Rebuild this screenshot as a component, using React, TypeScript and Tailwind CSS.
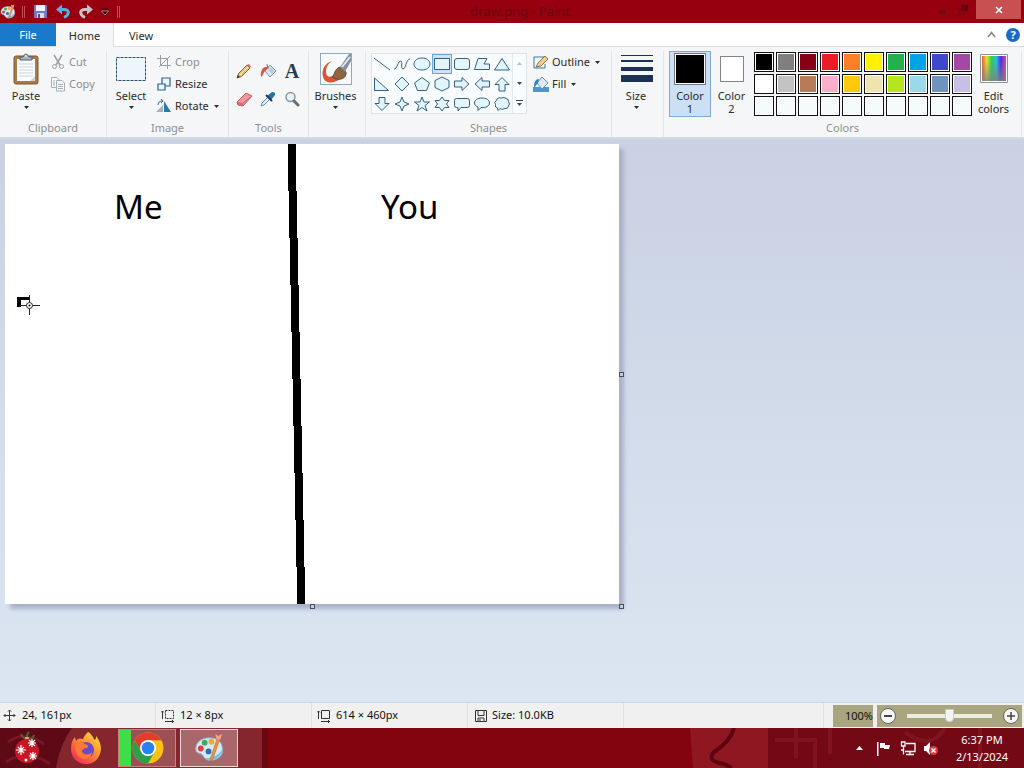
import React from 'react';

const INK = '#1f4e79';

const TOP_COLORS = ['#000000', '#7f7f7f', '#880015', '#ed1c24', '#ff7f27', '#fff200', '#22b14c', '#00a2e8', '#3f48cc', '#a349a4'];
const MID_COLORS = ['#ffffff', '#c3c3c3', '#b97a57', '#ffaec9', '#ffc90e', '#efe4b0', '#b5e61d', '#99d9ea', '#7092be', '#c8bfe7'];
const EMPTY_COLORS = Array.from({ length: 10 }, () => '#f5fafb');
const PALETTE = [...TOP_COLORS, ...MID_COLORS, ...EMPTY_COLORS];

const SHAPES: { name: string; d: string }[] = [
  { name: 'Line', d: 'M2 4 L18 16' },
  { name: 'Curve', d: 'M2 15 C5 16 6 6 9 7 C11 8 8 14 11 15 C14 15 14 5 18 5' },
  { name: 'Oval', d: 'M10 4 C14.500 4 18 6.500 18 10 C18 13.500 14.500 16 10 16 C5.500 16 2 13.500 2 10 C2 6.500 5.500 4 10 4 Z' },
  { name: 'Rectangle', d: 'M2.500 4.500 H17.500 V15.500 H2.500 Z' },
  { name: 'Rounded rectangle', d: 'M5 4.500 H15 Q17.500 4.500 17.500 7 V13 Q17.500 15.500 15 15.500 H5 Q2.500 15.500 2.500 13 V7 Q2.500 4.500 5 4.500 Z' },
  { name: 'Polygon', d: 'M6 4.500 H15 L12 10 H17.500 V15.500 H2.500 Z' },
  { name: 'Triangle', d: 'M10 4.500 L17.500 16 H2.500 Z' },
  { name: 'Right triangle', d: 'M2.500 4 V16.500 H16.500 Z' },
  { name: 'Diamond', d: 'M10 3 L17 10 L10 17 L3 10 Z' },
  { name: 'Pentagon', d: 'M10 3.500 L17.500 9 L14.500 16.500 H5.500 L2.500 9 Z' },
  { name: 'Hexagon', d: 'M10 3 L17 6.500 V13.500 L10 17 L3 13.500 V6.500 Z' },
  { name: 'Right arrow', d: 'M2.500 7 H10 V3.500 L17 10 L10 16.500 V13 H2.500 Z' },
  { name: 'Left arrow', d: 'M17.500 7 H10 V3.500 L3 10 L10 16.500 V13 H17.500 Z' },
  { name: 'Up arrow', d: 'M7 17 V10.500 H3 L10 3.500 L17 10.500 H13 V17 Z' },
  { name: 'Down arrow', d: 'M7 3.500 V9.500 H3 L10 16.500 L17 9.500 H13 V3.500 Z' },
  { name: 'Four-point star', d: 'M10 3 L12 8 L17 10 L12 12 L10 17 L8 12 L3 10 L8 8 Z' },
  { name: 'Five-point star', d: 'M10 3 L12 8 H17.500 L13 11.500 L15 17 L10 13.500 L5 17 L7 11.500 L2.500 8 H8 Z' },
  { name: 'Six-point star', d: 'M10 3 L12.500 6.500 H17 L14.500 10 L17 13.500 H12.500 L10 17 L7.500 13.500 H3 L5.500 10 L3 6.500 H7.500 Z' },
  { name: 'Rounded callout', d: 'M4.500 4.500 H15.500 Q17.500 4.500 17.500 6.500 V11.500 Q17.500 13.500 15.500 13.500 H9 L6 17 V13.500 H4.500 Q2.500 13.500 2.500 11.500 V6.500 Q2.500 4.500 4.500 4.500 Z' },
  { name: 'Oval callout', d: 'M10 4 C14.500 4 17.500 6 17.500 9 C17.500 12 14 14 9 13.500 L6 16.500 V13 C3.500 12 2.500 10.500 2.500 9 C2.500 6 5.500 4 10 4 Z' },
  { name: 'Cloud callout', d: 'M5 5 Q7 3 9.500 4 Q12 2.500 14 4.500 Q17 5 16.500 7.500 Q18.500 10 16.500 12 Q16 15 13 14.500 Q10 16.500 8 14.500 L6 16.500 L5.500 14 Q2.500 13.500 3.500 10.500 Q1.500 8 4 7 Z' },
];

function Caret({ className = '' }: { className?: string }) {
  return (
    <svg className={className} width="5" height="3" viewBox="0 0 5 3" aria-hidden="true">
      <path d="M0 0 H5 L2.500 3 Z" fill="currentColor" />
    </svg>
  );
}

function PaletteIcon({ size }: { size: number }) {
  return (
    <svg width={size} height={size} viewBox="0 0 32 32" aria-hidden="true">
      <path d="M16 5 C6 5 1 11 2 18 C3 22 7 20 9 23 C11 27 14 29 19 28 C27 27 31 21 29 14 C28 8 23 5 16 5 Z" fill="#d5e8f3" stroke="#7fb4d4" />
      <path d="M11 26 C17 30 28 27 29 17 C26 23 19 26 11 26 Z" fill="#72bfe3" />
      <circle cx="7" cy="16" r="3" fill="#d9453c" />
      <circle cx="11" cy="10" r="3" fill="#44a661" />
      <circle cx="18" cy="9" r="3" fill="#f0a83a" />
      <circle cx="15" cy="19" r="3" fill="#2c6fa8" />
      <path d="M27 6 L19 28 L17 29 L17 26 L24 5 Z" fill="#e89246" stroke="#b5672c" strokeWidth="0.500" />
      <path d="M23 6 L22 1 L25 3 L29 1 L27 7 Z" fill="#f2a488" />
    </svg>
  );
}

function TitleBar() {
  return (
    <header className="relative flex h-[23px] items-center bg-[#96000f] text-[#5f0008]">
      <div className="flex items-center">
        <PaletteIcon size={16} />
        <span className="ml-1.5 h-3 w-[3px] border-x border-[#b9525b]" />
        <button aria-label="Save" className="ml-2">
          <svg width="15" height="15" viewBox="0 0 15 15">
            <path d="M1 1 H14 V14 H1 Z" fill="#7478c4" />
            <path d="M3 1 H12 V7 H3 Z" fill="#f0f2fb" />
            <path d="M4 9 H11 V14 H4 Z" fill="#d8daf0" />
            <path d="M5 10 H7 V14 H5 Z" fill="#4a4f91" />
          </svg>
        </button>
        <button aria-label="Undo" className="ml-2">
          <svg width="15" height="15" viewBox="0 0 15 15">
            <path d="M3 5.500 H8 C14 5.500 13.500 11 8 13.500" fill="none" stroke="#5aaee0" strokeWidth="3" />
            <path d="M0 5.500 L6 0.500 V10.500 Z" fill="#5aaee0" />
          </svg>
        </button>
        <button aria-label="Redo" className="ml-[7px]">
          <svg width="15" height="15" viewBox="0 0 15 15">
            <path d="M12 5.500 H7 C1 5.500 1.500 11 7 13.500" fill="none" stroke="#c9c3cb" strokeWidth="3" />
            <path d="M15 5.500 L9 0.500 V10.500 Z" fill="#c9c3cb" />
          </svg>
        </button>
        <button aria-label="Customize quick access toolbar" className="ml-2">
          <svg width="8" height="8" viewBox="0 0 8 8">
            <path d="M0 1 H8" stroke="#2b0508" />
            <path d="M0.500 3 H7.500 L4 7 Z" fill="#1a0204" stroke="#e0a9ad" strokeWidth="0.700" />
          </svg>
        </button>
        <span className="ml-2 h-3 w-[3px] border-x border-[#b9525b]" />
      </div>
      <h1 className="absolute inset-x-0 pr-0 text-center text-[13px] leading-[23px] text-[#6b0a10] pointer-events-none">
        <span className="pl-4">draw.png - Paint</span>
      </h1>
      <div className="ml-auto flex h-full items-start pr-[3px]">
        <button aria-label="Minimize" className="flex h-[19px] w-6 items-center justify-center pt-1">
          <span className="h-1 w-1.5 bg-[#6a0d14]" />
        </button>
        <button aria-label="Restore" className="flex h-[19px] w-[18px] items-center justify-center">
          <svg width="10" height="10" viewBox="0 0 10 10">
            <path d="M3 0 H10 V6 H3 Z" fill="#62060e" />
            <path d="M0.500 4.500 H6.500 V9.500 H0.500 Z" fill="none" stroke="#730a12" />
          </svg>
        </button>
        <button aria-label="Close" className="ml-1 flex h-[19px] w-[45px] items-center justify-center bg-[#c75050]">
          <svg width="8" height="8" viewBox="0 0 8 8">
            <path d="M1 1 L7 7 M7 1 L1 7" stroke="#fff" strokeWidth="1.600" />
          </svg>
        </button>
      </div>
    </header>
  );
}

function Tabs() {
  return (
    <nav className="flex h-[23px] bg-white text-[11px] leading-[23px]">
      <button className="w-14 bg-[#1979ca] text-white">File</button>
      <button className="z-10 -mb-px h-6 w-[58px] border-r border-[#dadbdc] bg-[#f5f6f7] pt-px text-[#2b2b2b]">Home</button>
      <button className="w-[54px] pt-px text-[#2b2b2b]">View</button>
      <div className="ml-auto flex items-center gap-2.5 pr-1">
        <button aria-label="Minimize the ribbon">
          <svg width="9" height="7" viewBox="0 0 9 7">
            <path d="M1 6 L4.500 1.500 L8 6" fill="none" stroke="#858585" strokeWidth="1.500" />
          </svg>
        </button>
        <button aria-label="Help" className="flex h-[14px] w-[14px] items-center justify-center rounded-full bg-[#1b6cc0] text-[11px] leading-[14px] font-bold text-white">
          ?
        </button>
      </div>
    </nav>
  );
}

function Group({ label, className, children }: { label?: string; className: string; children: React.ReactNode }) {
  return (
    <section className={`flex flex-col border-r border-[#e2e6ea] ${className}`} aria-label={label}>
      <div className="flex h-[70px] items-start">{children}</div>
      {label && <div className="text-center text-[11px] leading-[14px] text-[#8b8f93]">{label}</div>}
    </section>
  );
}

function BigButton({ label, className, caret = true, children }: { label: string; className: string; caret?: boolean; children: React.ReactNode }) {
  return (
    <button className={`flex h-[66px] flex-col items-center pt-0.5 ${className}`}>
      <span className="flex h-8 items-center justify-center">{children}</span>
      <span className="mt-1 text-[11px] leading-[13px]">{label}</span>
      {caret && <Caret className="mt-1" />}
    </button>
  );
}

function RowButton({ label, muted, caret, children }: { label: string; muted?: boolean; caret?: boolean; children: React.ReactNode }) {
  return (
    <button className={`flex h-[22px] items-center gap-[3px] text-[11px] ${muted ? 'text-[#8d8d8d]' : 'text-[#2b2b2b]'}`}>
      <span className="flex w-4 justify-center">{children}</span>
      {label}
      {caret && <Caret className="ml-0.5" />}
    </button>
  );
}

function PencilIcon() {
  return (
    <svg width="16" height="16" viewBox="0 0 16 16">
      <path d="M1 15 L2.500 10.500 L11 2 L14 5 L5.500 13.500 Z" fill="#f2c36b" stroke="#5c4a32" strokeWidth="0.800" />
      <path d="M11 2 L12.500 0.800 L15.200 3.500 L14 5 Z" fill="#d87467" />
      <path d="M1 15 L2 12 L4 14 Z" fill="#333" />
      <path d="M4 12 L12 4" stroke="#fff0c5" />
    </svg>
  );
}

function BucketIcon() {
  return (
    <svg width="17" height="17" viewBox="0 0 17 17">
      <path d="M5 8 L10 2 L16 8 L10 14 Z" fill="#dde8f1" stroke="#7891a8" />
      <path d="M8 7 L11 4 L15 8 L12 11 Z" fill="#b9cee0" />
      <path d="M8 6 L7 1" stroke="#667f96" />
      <path d="M9 4 C4 3 0 6 1 14 C3 13 3 10 5 8 Z" fill="#d55c42" />
    </svg>
  );
}

function Ribbon() {
  return (
    <div className="flex h-[93px] border-t border-b-2 border-t-[#dadbdc] border-b-[#d2dae6] bg-[#f5f6f7] pt-1 text-[#2b2b2b]">
      <Group label="Clipboard" className="w-[107px]">
        <BigButton label="Paste" className="ml-0.5 w-12">
          <svg width="26" height="32" viewBox="0 0 26 32">
            <rect x="1" y="3" width="24" height="28" rx="2" fill="#a9794a" stroke="#7d5935" />
            <path d="M4 6 H22 V28 H4 Z" fill="#fafcfe" />
            <path d="M6 11 H20 M6 14 H20 M6 17 H20 M6 20 H20 M6 23 H20" stroke="#cbd3da" />
            <path d="M17 28 L22 23 V28 Z" fill="#cfd6dd" />
            <path d="M7 7 V4 H10 Q13 -2 16 4 H19 V7 Z" fill="#a8b5be" stroke="#526069" />
            <circle cx="13" cy="3" r="1" fill="#eef4f7" />
          </svg>
        </BigButton>
        <div>
          <RowButton label="Cut" muted>
            <svg width="14" height="16" viewBox="0 0 14 16" fill="none" stroke="#95a0aa">
              <path d="M3 1 L9 11 M11 1 L5 11" strokeWidth="1.500" />
              <circle cx="3.500" cy="12.500" r="2" />
              <circle cx="10.500" cy="12.500" r="2" />
            </svg>
          </RowButton>
          <RowButton label="Copy" muted>
            <svg width="16" height="16" viewBox="0 0 16 16" fill="#f8fafb" stroke="#a5afb8">
              <path d="M1.500 1.500 H7 L9.500 4 V11.500 H1.500 Z" />
              <path d="M6.500 4.500 H12 L14.500 7 V15 H6.500 Z" />
              <path d="M3 5 H5 M3 7 H5 M3 9 H5 M8 8.500 H13 M8 10.500 H13 M8 12.500 H13" />
            </svg>
          </RowButton>
        </div>
      </Group>

      <Group label="Image" className="w-[122px]">
        <BigButton label="Select" className="ml-1 w-10">
          <svg width="32" height="26" viewBox="0 0 32 26">
            <rect x="1.500" y="1.500" width="29" height="23" fill="#edf5fd" stroke="#2d4b6c" strokeDasharray="3 1" />
          </svg>
        </BigButton>
        <div className="ml-[5px]">
          <RowButton label="Crop" muted>
            <svg width="14" height="14" viewBox="0 0 14 14" fill="none" stroke="#98a1aa">
              <path d="M3.500 0 V10.500 H14 M0 3.500 H10.500 V14 M2 12 L13 1" />
            </svg>
          </RowButton>
          <RowButton label="Resize">
            <svg width="14" height="14" viewBox="0 0 14 14" fill="#edf6fc" stroke="#2a628f" strokeWidth="1.200">
              <path d="M5 1 H13 V9 H5 Z" />
              <path d="M1 7 H8 V13 H1 Z" />
            </svg>
          </RowButton>
          <RowButton label="Rotate" caret>
            <svg width="16" height="14" viewBox="0 0 16 14">
              <path d="M0 13 H7 V6 Z" fill="#a9b2ba" />
              <path d="M8 13 V2 L15 13 Z" fill="#2879ae" />
              <path d="M2 6 C2 3 4 2 6 2 M5 0 L7 2 L5 4" fill="none" stroke="#2f648b" />
            </svg>
          </RowButton>
        </div>
      </Group>

      <Group label="Tools" className="w-20">
        <div className="ml-[3px] mt-1.5 grid grid-cols-[repeat(3,24px)] auto-rows-[28px] place-items-center">
          <button aria-label="Pencil"><PencilIcon /></button>
          <button aria-label="Fill with color"><BucketIcon /></button>
          <button aria-label="Text" className="font-['Liberation_Serif',serif] text-[20px] leading-5 font-bold text-[#2a3b4f]">A</button>
          <button aria-label="Eraser">
            <svg width="17" height="15" viewBox="0 0 17 15">
              <path d="M1 10 L10 1 L16 4 L7 14 L2 13 Z" fill="#ef9a9a" stroke="#bd5c63" />
              <path d="M1 10 L7 11 L7 14 L2 13 Z" fill="#d9686d" />
              <path d="M7 11 L16 4" stroke="#c9656a" />
            </svg>
          </button>
          <button aria-label="Color picker">
            <svg width="16" height="16" viewBox="0 0 16 16">
              <path d="M1 15 L2 12 L8 6 L10 8 L4 14 Z" fill="#d7edf9" stroke="#6c8da7" />
              <path d="M7 5 L11 9 L15 4 Q16 1 12 1 Z" fill="#2a6ea7" />
              <path d="M6 4 L12 10" stroke="#173c60" strokeWidth="2" />
            </svg>
          </button>
          <button aria-label="Magnifier">
            <svg width="16" height="16" viewBox="0 0 16 16">
              <circle cx="6.500" cy="6" r="4.500" fill="#e6f1f8" stroke="#8d969e" strokeWidth="1.500" />
              <path d="M10 10 L14 14" stroke="#666d73" strokeWidth="3" strokeLinecap="round" />
            </svg>
          </button>
        </div>
      </Group>

      <Group className="w-[57px]">
        <BigButton label="Brushes" className="w-[53px]">
          <svg width="32" height="32" viewBox="0 0 32 32">
            <rect x="0.500" y="0.500" width="31" height="31" fill="#f7fafc" stroke="#8faabd" />
            <path d="M13 8 C5 9 1 17 3 24 C5 31 14 31 20 26 L14 22 C10 25 6 24 6 19 C6 14 8 10 13 8 Z" fill="#df5336" />
            <path d="M12 24 C15 22 14 16 20 14 L26 19 C27 25 20 29 12 24 Z" fill="#8f6440" stroke="#6d482b" />
            <path d="M20 14 L29 1 H31 V8 L25 19 Z" fill="#8490a5" />
            <path d="M22 14 L30 4" stroke="#e1e6ee" strokeWidth="2" />
          </svg>
        </BigButton>
      </Group>

      <Group label="Shapes" className="w-[246px]">
        <div className="ml-[5px] mt-0.5 flex h-[61px] border border-[#dce3ea] bg-[#f8fcff]">
          <div className="grid grid-cols-[repeat(7,20px)] auto-rows-[20px]">
            {SHAPES.map((shape) => (
              <button
                key={shape.name}
                aria-label={shape.name}
                className={shape.name === 'Rectangle' ? 'bg-[#cde2f8] outline -outline-offset-1 outline-[#6ba3dd]' : ''}
              >
                <svg width="20" height="20" viewBox="0 0 20 20">
                  <path d={shape.d} fill={shape.name === 'Line' || shape.name === 'Curve' ? 'none' : '#e2f5fb'} stroke={INK} strokeWidth="0.900" />
                </svg>
              </button>
            ))}
          </div>
          <div className="flex w-3.5 flex-col border-l border-[#e4e9ee] text-[#444]">
            <button aria-label="Scroll up" className="flex flex-1 items-center justify-center text-[#b8bdc2]"><Caret className="rotate-180" /></button>
            <button aria-label="Scroll down" className="flex flex-1 items-center justify-center"><Caret /></button>
            <button aria-label="More shapes" className="flex flex-1 flex-col items-center justify-center gap-0.5">
              <span className="h-px w-[7px] bg-[#444]" />
              <Caret />
            </button>
          </div>
        </div>
        <div className="ml-1.5">
          <RowButton label="Outline" caret>
            <svg width="16" height="14" viewBox="0 0 16 14">
              <path d="M1 2 H12 M1 2 V13 H12 V9" fill="none" stroke="#3e77a3" />
              <path d="M3 12 L5 8 L12 1 L15 4 L8 11 Z" fill="#f0cf8b" stroke="#6b5a3e" strokeWidth="0.800" />
            </svg>
          </RowButton>
          <RowButton label="Fill" caret>
            <svg width="16" height="16" viewBox="0 0 16 16">
              <path d="M0 11 H16 V16 H0 Z" fill="#4a97d2" />
              <path d="M4 7 L9 1 L15 7 L9 13 Z" fill="#dce7ef" stroke="#73899d" />
              <path d="M6 3 C2 3 1 7 1 12 L5 7 Z" fill="#2e83c4" />
            </svg>
          </RowButton>
        </div>
      </Group>

      <Group className="w-[52px]">
        <BigButton label="Size" className="w-12">
          <svg width="32" height="28" viewBox="0 0 32 28" fill="#1e3353" className="ml-0.5">
            <path d="M0 0 H32 V1 H0 Z M0 5 H32 V7 H0 Z M0 12 H32 V16 H0 Z M0 20 H32 V27 H0 Z" />
          </svg>
        </BigButton>
      </Group>

      <Group label="Colors" className="mr-0.5 flex-1">
        <BigButton label="" caret={false} className="ml-[5px] w-[42px] border border-[#7fa9d6] bg-[#cbdff5] pt-px">
          <ColorLabel digit="1">
            <span className="h-8 w-8 border border-[#6f767d] bg-black outline -outline-offset-2 outline-white" />
          </ColorLabel>
        </BigButton>
        <BigButton label="" caret={false} className="w-[41px]">
          <ColorLabel digit="2">
            <span className="h-[26px] w-6 border border-[#848484] bg-white" />
          </ColorLabel>
        </BigButton>
        <div className="ml-0.5 grid grid-cols-[repeat(10,20px)] gap-0.5 pt-px">
          {PALETTE.map((color, i) => (
            <button key={i} aria-label={`Palette color ${i + 1}`} className="h-5 w-5 border border-[#111] bg-white p-px">
              <span className="block h-full w-full" style={{ backgroundColor: color }} />
            </button>
          ))}
        </div>
        <button className="flex w-[43px] flex-col items-center pt-0.5 text-[11px] leading-[13px]">
          <svg width="30" height="32" viewBox="0 0 30 32">
            <defs>
              <linearGradient id="hue">
                <stop offset="0" stopColor="#f05a3c" />
                <stop offset="0.200" stopColor="#e3e232" />
                <stop offset="0.400" stopColor="#28d04c" />
                <stop offset="0.600" stopColor="#32b8e8" />
                <stop offset="0.780" stopColor="#4432dc" />
                <stop offset="1" stopColor="#f03aa5" />
              </linearGradient>
              <linearGradient id="fade" x2="0" y2="1">
                <stop offset="0.200" stopColor="#808080" stopOpacity="0" />
                <stop offset="1" stopColor="#808080" stopOpacity="0.800" />
              </linearGradient>
            </defs>
            <path d="M1.500 1.500 H28.500 V29.500 H1.500 Z" fill="#fff" stroke="#8d9297" />
            <path d="M3 3 H27 V28 H3 Z" fill="url(#hue)" />
            <path d="M3 3 H27 V28 H3 Z" fill="url(#fade)" />
          </svg>
          <span className="mt-1">Edit<br />colors</span>
        </button>
      </Group>
    </div>
  );
}

function ColorLabel({ digit, children }: { digit: string; children: React.ReactNode }) {
  return (
    <span className="flex flex-col items-center self-start text-[11px] leading-[13px]">
      <span className="flex h-8 items-center">{children}</span>
      <span className="mt-1">Color</span>
      <span>{digit}</span>
    </span>
  );
}

function Handle({ className }: { className: string }) {
  return <span className={`absolute h-[5px] w-[5px] border border-[#4b5058] bg-[#c5ccd6] ${className}`} />;
}

function Workspace() {
  return (
    <main className="flex-1 bg-linear-to-b from-[#c9d1e2] to-[#dbe6f2] pl-[5px] pt-[5px]">
      <div className="relative h-[460px] w-[614px] bg-white shadow-[5px_5px_4px_#a9b2c8]">
        <svg className="block" width="614" height="460" viewBox="0 0 614 460" role="img" aria-label="Drawing canvas">
          {Array.from({ length: 10 }, (_, i) => (
            <rect key={i} x={283 + i} y={i * 47} width="8" height="47" />
          ))}
          <text x="109" y="75" fontSize="33" fontFamily="Noto Sans, sans-serif">Me</text>
          <text x="376" y="75" fontSize="33" fontFamily="Noto Sans, sans-serif">You</text>
          <path d="M12 153 H24 V156 H16 V163 H12 Z" />
          <path d="M24.500 151 V171 M14 161.500 H35" stroke="#222" />
          <circle cx="24.500" cy="161.500" r="3" fill="#fff" stroke="#222" />
          <circle cx="24.500" cy="161.500" r="1" />
        </svg>
        <Handle className="top-[228px] left-[614px]" />
        <Handle className="top-[460px] left-[305px]" />
        <Handle className="top-[460px] left-[614px]" />
      </div>
    </main>
  );
}

function StatusCell({ text, children }: { text: string; children: React.ReactNode }) {
  return (
    <div className="flex w-[156px] items-center gap-[5px] border-r border-[#dbe2e8] pl-[3px]">
      {children}
      {text}
    </div>
  );
}

function StatusBar() {
  return (
    <footer className="flex h-[26px] border-t border-[#c9d8e4] bg-[#f0f0f1] text-[11px] text-[#111]">
      <StatusCell text="24, 161px">
        <svg width="14" height="14" viewBox="0 0 14 14" fill="none" stroke="#333">
          <path d="M6.500 1 V12 M1 6.500 H12 M5 2.500 L6.500 1 L8 2.500 M5 10.500 L6.500 12 L8 10.500 M2.500 5 L1 6.500 L2.500 8 M10.500 5 L12 6.500 L10.500 8" />
        </svg>
      </StatusCell>
      <StatusCell text="12 × 8px">
        <svg className="ml-0.5" width="14" height="14" viewBox="0 0 14 14" fill="none" stroke="#333">
          <path d="M4.500 1.500 H12.500 V9.500 H4.500 Z" strokeDasharray="2 1" />
          <path d="M1.500 10 V2 M0 3.500 L1.500 2 L3 3.500 M4 12.500 H13 M11 11 L12.500 12.500 L11 14" />
        </svg>
      </StatusCell>
      <StatusCell text="614 × 460px">
        <svg className="ml-0.5" width="14" height="14" viewBox="0 0 14 14" fill="none" stroke="#333">
          <path d="M4.500 1.500 H12.500 V9.500 H4.500 Z" />
          <path d="M1.500 10 V2 M0 3.500 L1.500 2 L3 3.500 M4 12.500 H13 M11 11 L12.500 12.500 L11 14" />
        </svg>
      </StatusCell>
      <StatusCell text="Size: 10.0KB">
        <svg className="ml-1" width="12" height="12" viewBox="0 0 12 12" fill="none" stroke="#333">
          <path d="M0.500 0.500 H11.500 V11.500 H0.500 Z M3 0.500 V5.500 H9 V0.500 M3 11.500 V8 H9 V11.500 M5 9 V11" />
        </svg>
      </StatusCell>
      <div className="flex-1 border-r border-[#dbe2e8]" />
      <div className="flex items-center py-px pr-0.5 pl-[9px]">
        <label htmlFor="zoom" className="h-[22px] w-10 bg-[#a9a57f] text-right leading-[22px]">100%</label>
        <div className="ml-1 flex h-[22px] items-center bg-[#a9a57f] px-[3px]">
          <button aria-label="Zoom out" className="flex h-4 w-4 items-center justify-center rounded-full border border-[#666] bg-[#f5f5f5]">
            <span className="h-0.5 w-2 bg-[#444]" />
          </button>
          <input
            id="zoom"
            type="range"
            defaultValue={50}
            className="mx-[11px] h-4 w-[85px] appearance-none bg-transparent [&::-webkit-slider-runnable-track]:h-1 [&::-webkit-slider-runnable-track]:bg-[#eeeede] [&::-webkit-slider-thumb]:-mt-[5px] [&::-webkit-slider-thumb]:h-[13px] [&::-webkit-slider-thumb]:w-[9px] [&::-webkit-slider-thumb]:appearance-none [&::-webkit-slider-thumb]:rounded-b-sm [&::-webkit-slider-thumb]:border [&::-webkit-slider-thumb]:border-[#c9c9c9] [&::-webkit-slider-thumb]:bg-[#f4f4f4]"
          />
          <button aria-label="Zoom in" className="flex h-4 w-4 items-center justify-center rounded-full border border-[#666] bg-[#f5f5f5]">
            <svg width="8" height="8" viewBox="0 0 8 8">
              <path d="M4 0 V8 M0 4 H8" stroke="#444" strokeWidth="1.500" />
            </svg>
          </button>
        </div>
      </div>
    </footer>
  );
}

function Wallpaper() {
  return (
    <svg className="absolute inset-0 h-full w-full" viewBox="0 0 1024 40" preserveAspectRatio="none" aria-hidden="true">
      <rect width="1024" height="40" fill="#83040f" />
      <path d="M0 0 H72 L56 40 H0 Z" fill="#5d0916" />
      <path d="M8 14 Q24 2 44 16 M6 34 Q26 20 50 36" fill="none" stroke="#7a1622" strokeWidth="3" />
      <path d="M72 0 H262 V40 H56 Q60 16 72 0 Z" fill="#85252d" />
      <path d="M262 0 H268 V40 H262 Z" fill="#690811" />
      <path d="M690 0 H768 V40 H693 Z" fill="#8f1722" />
      <path d="M734 0 Q730 14 714 24 Q706 33 724 36 L732 40" fill="none" stroke="#5d0410" strokeWidth="4" />
      <path d="M768 0 H1024 V40 H768 Z" fill="#740916" />
      <path d="M775 12 H815 V40 M796 0 V30 M830 0 V26 M905 4 Q930 24 945 0 M980 0 V40" fill="none" stroke="#8b1a26" strokeWidth="4" opacity="0.600" />
    </svg>
  );
}

function Taskbar() {
  return (
    <div className="relative flex h-10 overflow-hidden text-white">
      <Wallpaper />
      <div className="relative flex items-center">
        <button aria-label="Start" className="flex w-[54px] justify-center">
          <svg width="28" height="34" viewBox="0 0 28 34">
            <path d="M14 9 Q9 6 8 3 M14 9 Q13 4 16 1 M14 9 Q20 8 21 4" fill="none" stroke="#4f6238" strokeWidth="2" />
            <rect x="12" y="6" width="4" height="4" fill="#c9a95c" />
            <circle cx="14" cy="20" r="12" fill="#ca1525" />
            <path d="M8 14 V24 M3 19 H13 M5 16 L11 22 M11 16 L5 22 M19 8 V16 M15 12 H23 M16 9 L22 15 M22 9 L16 15 M20 21 V29 M16 25 H24 M17 22 L23 28 M23 22 L17 28" stroke="#fff" strokeWidth="1.200" />
            <circle cx="13" cy="29" r="1.500" fill="#fff" />
          </svg>
        </button>
        <button aria-label="Firefox" className="flex w-16 justify-center">
          <svg width="32" height="34" viewBox="0 0 32 34">
            <defs>
              <linearGradient id="fox" x1="1" y1="0" x2="0.200" y2="1">
                <stop offset="0" stopColor="#fff04a" />
                <stop offset="0.450" stopColor="#ff9528" />
                <stop offset="1" stopColor="#ef285e" />
              </linearGradient>
            </defs>
            <path d="M18 1 C22 3 23 7 25 9 C26 8 26 6 26 5 C31 11 32 18 30 23 C27 31 21 33 16 33 C7 33 1 26 1 18 C1 13 2 9 5 6 L6 10 C8 7 10 7 13 8 C14 5 16 3 18 1 Z" fill="url(#fox)" />
            <circle cx="16" cy="19" r="8" fill="#6a49cb" />
            <path d="M5 13 Q11 9 15 13 Q20 14 17 17 Q12 17 12 21 Q17 26 22 21 Q21 29 13 28 Q5 26 5 13 Z" fill="#ff7834" />
          </svg>
        </button>
        <button aria-label="Chrome" className="flex h-[38px] w-[58px] items-center border border-[#c88386] bg-[#9b5054]">
          <span className="h-full w-3 bg-[#3fdd48]" />
          <svg className="ml-px" width="32" height="32" viewBox="0 0 32 32">
            <circle cx="16" cy="16" r="15.500" fill="#fbc116" />
            <path d="M2.600 8.200 A15.500 15.500 0 0 1 29.400 8.200 L16 8.200 L9.300 19.800 Z" fill="#e33b2e" />
            <path d="M2.600 8.200 A15.500 15.500 0 0 0 16 31.500 L22.800 19.800 L9.300 19.800 Z" fill="#2c9f4b" />
            <circle cx="16" cy="16" r="8" fill="#fff" />
            <circle cx="16" cy="16" r="6.300" fill="#2781ee" />
          </svg>
        </button>
        <button aria-label="Paint" className="ml-1 flex h-[38px] w-[58px] items-center justify-center border border-[#efdadb] bg-[#a9666b]">
          <PaletteIcon size={31} />
        </button>
      </div>
      <div className="relative ml-auto flex items-center pr-[15px]">
        <button aria-label="Show hidden icons">
          <svg width="7" height="4" viewBox="0 0 7 4"><path d="M0 4 L3.500 0 L7 4 Z" fill="#fff" /></svg>
        </button>
        <svg className="ml-[13px]" width="16" height="15" viewBox="0 0 16 15" fill="#fff">
          <path d="M1 1 H2.500 V15 H1 Z M4 2 H9 V4 H14 L13 8 H8 V7 H4 Z" />
        </svg>
        <svg className="ml-2" width="16" height="15" viewBox="0 0 16 15" fill="none" stroke="#fff">
          <path d="M6 2.500 H15 V10.500 H5 M10 10.500 V13 M6 13.500 H14 M1.500 1 H5 V5 H1.500 Z M3.500 5 V13.500 M1 9 H4" strokeWidth="1.300" />
        </svg>
        <svg className="ml-[7px]" width="16" height="15" viewBox="0 0 16 15">
          <path d="M1 5 H3 L7 1 V14 L3 10 H1 Z" fill="#fff" />
          <circle cx="10.500" cy="9.500" r="4.500" fill="#d83b42" />
          <path d="M8.500 7.500 L12.500 11.500 M12.500 7.500 L8.500 11.500" stroke="#fff" strokeWidth="1.400" />
        </svg>
        <div className="ml-4 w-[54px] text-center text-[11px] leading-[17px] whitespace-nowrap">
          <div>6:37 PM</div>
          <div>2/13/2024</div>
        </div>
      </div>
    </div>
  );
}

export default function App() {
  return (
    <div className="flex min-h-screen flex-col overflow-hidden font-['Noto_Sans','Open_Sans',sans-serif]">
      <TitleBar />
      <Tabs />
      <Ribbon />
      <Workspace />
      <StatusBar />
      <Taskbar />
    </div>
  );
}
